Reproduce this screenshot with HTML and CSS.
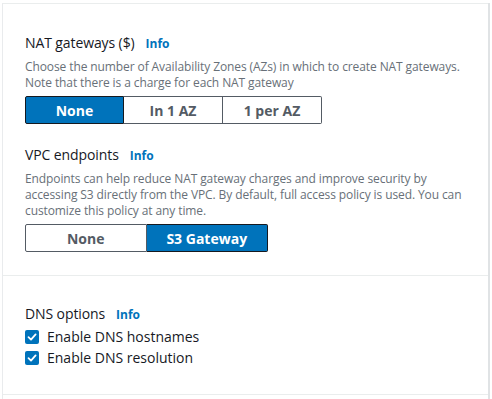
FILE: index.html
```html
<!DOCTYPE html>
<html>
<head>
<meta charset="utf-8">
<link rel="stylesheet" href="styles.css">
</head>
<body>
<div class="panel">
  <div class="section top">
    <div class="field">
      <div class="label-row"><span class="label">NAT gateways ($)</span><a class="info">Info</a></div>
      <p class="desc">Choose the number of Availability Zones (AZs) in which to create NAT gateways. Note that there is a charge for each NAT gateway</p>
      <div class="seg seg-nat">
        <button class="seg-btn active">None</button>
        <button class="seg-btn">In 1 AZ</button>
        <button class="seg-btn">1 per AZ</button>
      </div>
    </div>
    <div class="field">
      <div class="label-row"><span class="label">VPC endpoints</span><a class="info">Info</a></div>
      <p class="desc">Endpoints can help reduce NAT gateway charges and improve security by accessing S3 directly from the VPC. By default, full access policy is used. You can customize this policy at any time.</p>
      <div class="seg seg-vpc">
        <button class="seg-btn">None</button>
        <button class="seg-btn active">S3 Gateway</button>
      </div>
    </div>
  </div>
  <div class="section dns">
    <div class="label-row"><span class="label">DNS options</span><a class="info">Info</a></div>
    <label class="check"><span class="box"><svg width="10" height="10" viewBox="0 0 10 10"><path d="M1.5 5.2 L4 7.6 L8.6 2.4" fill="none" stroke="#fff" stroke-width="1.8" stroke-linecap="round" stroke-linejoin="round"/></svg></span>Enable DNS hostnames</label>
    <label class="check"><span class="box"><svg width="10" height="10" viewBox="0 0 10 10"><path d="M1.5 5.2 L4 7.6 L8.6 2.4" fill="none" stroke="#fff" stroke-width="1.8" stroke-linecap="round" stroke-linejoin="round"/></svg></span>Enable DNS resolution</label>
  </div>
</div>
</body>
</html>
```
FILE: styles.css
```css
html, body { margin: 0; padding: 0; background: #fff; }
body { font-family: "Open Sans", "Noto Sans", sans-serif; color: #16191f; }
.panel {
  margin-left: 2px;
  width: 488px;
  border-left: 1px solid #e9ebed;
  border-right: 2px solid #e0e3e5;
  height: 399px;
  box-sizing: border-box;
}
.section { border-top: 1px solid #eaeded; }
.top { margin-top: 3px; padding: 29px 22px 23px 22px; }
.dns { padding: 28px 22px 26px 22px; border-bottom: 1px solid #eaeded; }
.field + .field { margin-top: 21px; }
.label-row { display: flex; align-items: baseline; gap: 11px; height: 22px; }
.label { font-size: 14px; letter-spacing: -0.1px; }
.info { font-size: 12px; font-weight: 700; color: #0073bb; }
.desc { margin: 4px 0 5px 0; font-size: 12px; letter-spacing: -0.1px; line-height: 16px; color: #687078; }
.seg { display: flex; }
.seg-btn {
  font-family: inherit;
  font-size: 14px;
  font-weight: 700;
  color: #545b64;
  background: #fff;
  border: 1px solid #545b64;
  height: 28px;
  padding: 0;
  margin: 0;
}
.seg-btn + .seg-btn { border-left: none; }
.seg-btn:first-child { border-radius: 2px 0 0 2px; }
.seg-btn:last-child { border-radius: 0 2px 2px 0; }
.seg-btn.active { background: #0073bb; color: #fff; border-color: #16191f; }
.seg-nat .seg-btn { width: 99px; }
.seg-vpc .seg-btn { width: 121.5px; }
.check { display: flex; align-items: center; gap: 8px; font-size: 14px; height: 21px; }
.box {
  width: 14px; height: 14px; border-radius: 2px; background: #0073bb;
  display: flex; align-items: center; justify-content: center;
}
```
